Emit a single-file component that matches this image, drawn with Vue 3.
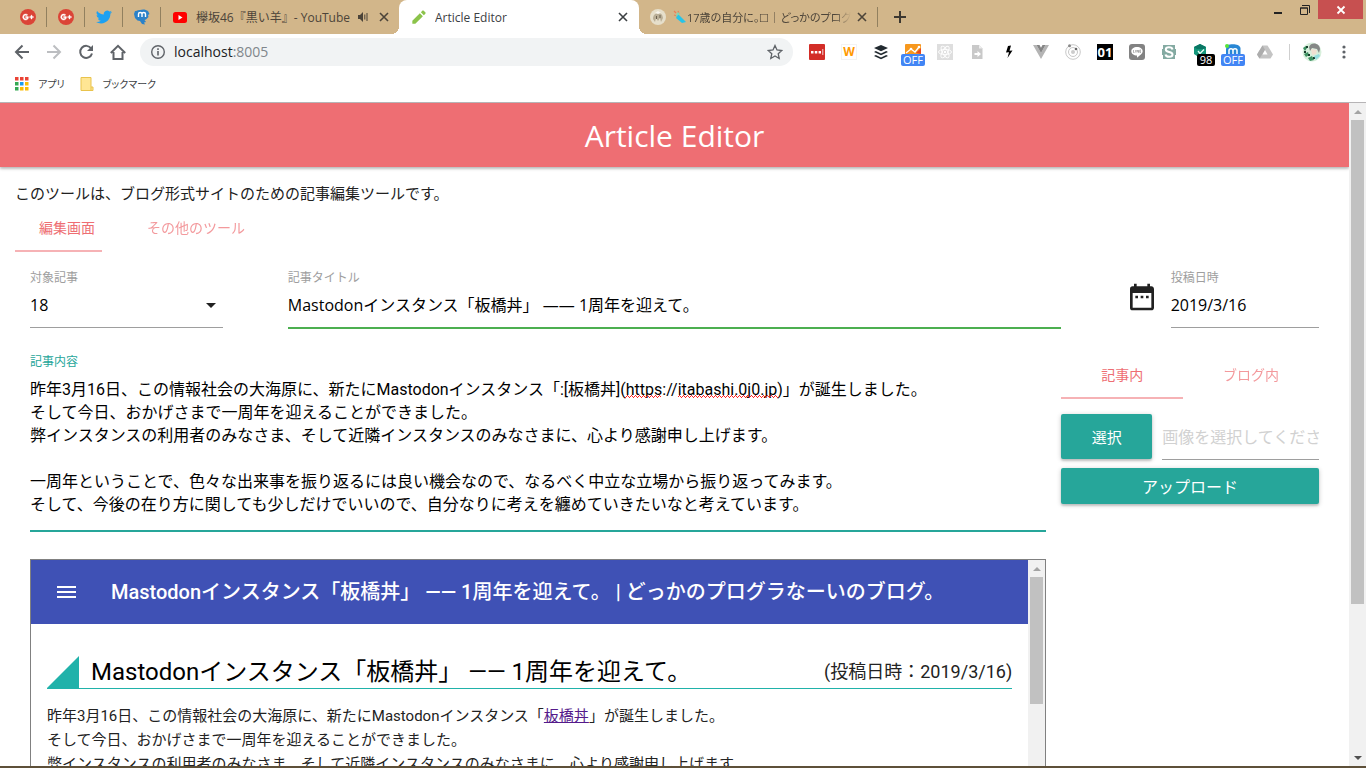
<script setup>
import { ref } from 'vue'

const pinned = [
  { name: 'Google+', kind: 'gplus' },
  { name: 'Google+', kind: 'gplus' },
  { name: 'Twitter', kind: 'twitter' },
  { name: 'Mastodon', kind: 'mastodon' },
]
const address = ref('localhost:8005')
const article = ref('18')
const title = ref('Mastodonインスタンス「板橋丼」 —— 1周年を迎えて。')
const postedAt = ref('2019/3/16')
const body = ref(`昨年3月16日、この情報社会の大海原に、新たにMastodonインスタンス「:[板橋丼](https://itabashi.0j0.jp)」が誕生しました。
そして今日、おかげさまで一周年を迎えることができました。
弊インスタンスの利用者のみなさま、そして近隣インスタンスのみなさまに、心より感謝申し上げます。

一周年ということで、色々な出来事を振り返るには良い機会なので、なるべく中立な立場から振り返ってみます。
そして、今後の在り方に関しても少しだけでいいので、自分なりに考えを纏めていきたいなと考えています。`)
</script>

<template>
  <div class="browser">
    <div class="tabstrip">
      <div v-for="(p, i) in pinned" :key="i" class="pinned">
        <svg v-if="p.kind === 'gplus'" width="16" height="16" viewBox="0 0 16 16">
          <circle cx="8" cy="8" r="8" fill="#db4437" />
          <path d="M8.2 7.4H5.6v1.3h1.5c-.2.7-.7 1-1.5 1a1.7 1.7 0 1 1 1.1-3l1-.9A3 3 0 1 0 5.6 11c1.800 0 2.900-1.200 2.900-2.900zM11 6.200v1.400H9.700v1H11V10h1V8.600h1.400v-1H12V6.200z" fill="#fff" stroke="#fff" stroke-width=".4" />
        </svg>
        <svg v-else-if="p.kind === 'twitter'" width="16" height="16" viewBox="0 0 24 24">
          <path fill="#1da1f2" d="M23.950 4.570a10 10 0 0 1-2.820.770 4.960 4.960 0 0 0 2.160-2.720 9.900 9.900 0 0 1-3.120 1.180 4.920 4.920 0 0 0-8.380 4.480A13.940 13.940 0 0 1 1.640 3.160a4.920 4.920 0 0 0 1.520 6.570 4.900 4.900 0 0 1-2.230-.610v.060a4.920 4.920 0 0 0 3.950 4.830 5 5 0 0 1-2.210.080 4.940 4.940 0 0 0 4.600 3.420A9.870 9.870 0 0 1 0 19.540a13.990 13.990 0 0 0 7.550 2.210c9.140 0 14.300-7.720 14.010-14.650a10 10 0 0 0 2.390-2.530z" />
        </svg>
        <svg v-else width="16" height="16" viewBox="0 0 16 16">
          <path fill="#2b82c9" d="M1 2c2 0 3-1.500 5-1 3-1 6-.5 8 1l1.500 3-1.500 1 .5 2-2.500 2.500-1.500.5 1.500 2-2 .5 1 2-3-.5L6 12l-2.500-.5L1 9 0 5z" />
          <path d="M4.500 8V5c0-2 3.500-2 3.500 0v3m0-3c0-2 3.500-2 3.500 0v3" fill="none" stroke="#fff" stroke-width="1.400" />
        </svg>
      </div>

      <div class="tab tab-left">
        <svg width="16" height="16" viewBox="0 0 16 16"><rect x="1" y="3" width="14" height="11" rx="2.500" fill="#f00" /><path d="M6.500 6l4 2.500-4 2.500z" fill="#fff" /></svg>
        <span class="tab-title">欅坂46『黒い羊』- YouTube</span>
        <svg class="speaker" width="12" height="12" viewBox="0 0 12 12"><path d="M1 4h2l3-3v10L3 8H1z" fill="#4c4439" /><path d="M7.800 3.500v5M10 2v8" stroke="#4c4439" fill="none" /></svg>
        <button class="tab-close" aria-label="閉じる"><svg width="10" height="10" viewBox="0 0 10 10"><path d="M1 1l8 8M9 1l-8 8" stroke="currentColor" stroke-width="1.600" /></svg></button>
      </div>
      <div class="tab tab-active">
        <svg width="16" height="16" viewBox="0 0 24 24"><path fill="#8bc34a" d="M2 17.500V22h4.500L17.800 10.700l-4.500-4.500zM21.500 7a1.400 1.400 0 0 0 0-2L19 2.500a1.400 1.400 0 0 0-2 0l-2.200 2.200 4.500 4.500z" /></svg>
        <span class="tab-title">Article Editor</span>
        <button class="tab-close" aria-label="閉じる"><svg width="10" height="10" viewBox="0 0 10 10"><path d="M1 1l8 8M9 1l-8 8" stroke="currentColor" stroke-width="1.600" /></svg></button>
      </div>
      <div class="tab tab-right">
        <svg width="16" height="16" viewBox="0 0 16 16"><circle cx="8" cy="8" r="8" fill="#e6dfcb" /><path d="M3 10c0-7 9-9 10-1l-2 4-1-4-2 3-2-3-1 4z" fill="#b9ae96" /><path d="M6 7h1v3H6zM9.500 6h1v3h-1z" fill="#6b604f" /><path d="M5 4l3-2 3 2-3 1z" fill="#f8f5ec" /></svg>
        <svg class="cracker" width="14" height="14" viewBox="0 0 14 14"><path d="M5 4l8 8-4 1-6-5z" fill="#27c4e8" /><path d="M1 5l3 1M5 1l1 3M1 1l2 2" stroke="#ef7d54" stroke-width="1.200" /><path d="M2 7l3-5 2 2z" fill="#7ed6b6" /></svg>
        <span class="tab-title faded">17歳の自分に。☐｜どっかのプログ</span>
        <button class="tab-close" aria-label="閉じる"><svg width="10" height="10" viewBox="0 0 10 10"><path d="M1 1l8 8M9 1l-8 8" stroke="currentColor" stroke-width="1.600" /></svg></button>
      </div>
      <button class="new-tab" aria-label="新しいタブ"><svg width="12" height="12" viewBox="0 0 12 12"><path d="M6 0v12M0 6h12" stroke="#3d3830" stroke-width="2" /></svg></button>
      <div class="window-buttons">
        <button aria-label="最小化"><svg width="12" height="12" viewBox="0 0 12 12"><path d="M2 9h8" stroke="#222" stroke-width="2" /></svg></button>
        <button aria-label="元に戻す"><svg width="12" height="12" viewBox="0 0 12 12"><path d="M1.500 4v6.500h7V4zM1 4h8M3 1.500h7.500V9" fill="none" stroke="#222" /></svg></button>
        <button class="win-close" aria-label="ウィンドウを閉じる"><svg width="10" height="10" viewBox="0 0 10 10"><path d="M1.500 1.500l7 7M8.500 1.500l-7 7" stroke="#fff" stroke-width="1.800" /></svg></button>
      </div>
    </div>

    <div class="toolbar">
      <button class="nav" aria-label="戻る"><svg width="16" height="16" viewBox="0 0 16 16"><path d="M15 8H2M8.500 1.500L2 8l6.500 6.500" fill="none" stroke="#5f6368" stroke-width="2" /></svg></button>
      <button class="nav" aria-label="進む"><svg width="16" height="16" viewBox="0 0 16 16"><path d="M1 8h13M7.500 1.500L14 8l-6.500 6.500" fill="none" stroke="#bcbec1" stroke-width="2" /></svg></button>
      <button class="nav" aria-label="再読み込み"><svg width="16" height="16" viewBox="0 0 16 16"><path d="M13.200 4.500A6 6 0 1 0 14 9.500" fill="none" stroke="#5f6368" stroke-width="2" /><path d="M15 1v6H9z" fill="#5f6368" /></svg></button>
      <button class="nav" aria-label="ホーム"><svg width="16" height="16" viewBox="0 0 16 16"><path d="M.8 9L8 1.800 15.200 9M3.500 8V15h9V8" fill="none" stroke="#5f6368" stroke-width="2" /></svg></button>
      <div class="omnibox">
        <svg width="16" height="16" viewBox="0 0 16 16"><circle cx="8" cy="8" r="6.300" fill="none" stroke="#5f6368" stroke-width="1.400" /><path d="M8 7v4.500M8 4.300V6" stroke="#5f6368" stroke-width="1.600" /></svg>
        <label class="address"><span>localhost</span><span class="port">:8005</span><input v-model="address" aria-label="アドレス" /></label>
        <svg width="16" height="16" viewBox="0 0 16 16"><path d="M8 1.500l2 4.500 4.800.5-3.600 3.200 1 4.800L8 12l-4.200 2.500 1-4.800L1.200 6.500 6 6z" fill="none" stroke="#5f6368" stroke-width="1.300" /></svg>
      </div>

      <div class="extensions">
        <span class="ext"><svg width="16" height="16" viewBox="0 0 16 16"><rect width="16" height="16" rx="1" fill="#d32d27" /><path d="M2 7h2.500v2.500H2zM5.800 7h2.500v2.500H5.800zM9.600 7H12v2.500H9.600z" fill="#fff" /><path d="M13.800 5v6" stroke="#fff" stroke-width=".8" /></svg></span>
        <span class="ext ext-w">W</span>
        <span class="ext"><svg width="16" height="16" viewBox="0 0 16 16"><path d="M8 1l7 3-7 3.300L1 4z" fill="#222a30" /><path d="M1 8l1.800-.9L8 9.500l5.200-2.400L15 8l-7 3.300zM1 12l1.800-.9L8 13.500l5.200-2.400L15 12l-7 3.300z" fill="#222a30" /></svg></span>
        <span class="ext"><svg width="16" height="16" viewBox="0 0 16 16"><rect width="16" height="16" rx="1" fill="#f7981d" /><path d="M1 9l5-4 4 3 4-5" fill="none" stroke="#fff" stroke-width="1.300" /><circle cx="6" cy="5" r="1.300" fill="#fff" /><circle cx="14" cy="3" r="1.300" fill="#fff" /><path d="M11 9l5-5v6z" fill="#e8481c" /></svg><b class="badge blue">OFF</b></span>
        <span class="ext"><svg width="16" height="16" viewBox="0 0 16 16"><rect width="16" height="16" fill="#dedede" /><g fill="none" stroke="#fff" stroke-width=".9"><ellipse cx="8" cy="8" rx="6.500" ry="2.600" /><ellipse cx="8" cy="8" rx="6.500" ry="2.600" transform="rotate(60 8 8)" /><ellipse cx="8" cy="8" rx="6.500" ry="2.600" transform="rotate(120 8 8)" /></g><circle cx="8" cy="8" r="1.200" fill="#fff" /></svg></span>
        <span class="ext"><svg width="16" height="16" viewBox="0 0 16 16"><path d="M3 1h7l3.500 3.500V15H3z" fill="#c9c9c9" /><path d="M10 1v3.500h3.500z" fill="#eee" /><path d="M5.500 9h3V7l3.500 3-3.500 3v-2h-3z" fill="#fff" /></svg></span>
        <span class="ext"><svg width="16" height="16" viewBox="0 0 16 16"><path d="M7 2L5 8.500l3-.3L6.500 14l5-7.500-3 .3L10 1.500z" fill="#000" /></svg></span>
        <span class="ext"><svg width="16" height="16" viewBox="0 0 16 16"><path d="M0 1h3.500L8 9l4.500-8H16L8 15z" fill="#b4b4b4" /><path d="M3.500 1h3L8 3.700 9.500 1h3L8 9z" fill="#858585" /></svg></span>
        <span class="ext"><svg width="16" height="16" viewBox="0 0 16 16"><g fill="none" stroke="#c8c8c8"><circle cx="8" cy="8" r="7.300" /><circle cx="8" cy="8" r="4.500" /></g><circle cx="8" cy="8" r="2" fill="#ccc" /><circle cx="4.500" cy="1.800" r="1.500" fill="#888" /><circle cx="11" cy="5" r="1.300" fill="#666" /></svg></span>
        <span class="ext ext-01">01</span>
        <span class="ext"><svg width="16" height="16" viewBox="0 0 16 16"><rect width="16" height="16" rx="3" fill="#828282" /><path d="M8 3c3.300 0 5.700 1.900 5.700 4.300 0 2.300-2.900 4.200-5.700 6.400V11.600c-3.300 0-5.700-1.900-5.700-4.300S4.700 3 8 3z" fill="#fff" /><path d="M4.500 6v2.500h1M6.700 6v2.500M8 8.500V6l1.500 2.500V6M12 6h-1.200v2.500H12M10.800 7.200H12" stroke="#828282" stroke-width=".6" fill="none" /></svg></span>
        <span class="ext"><svg width="16" height="16" viewBox="0 0 16 16"><path d="M2 1h12v4h1v6h-1v4H2v-4H1V5h1z" fill="#84aaa2" /><path d="M11.500 5.500C11 2.500 4.800 2.500 4.800 5.500c0 3.500 6.700 1.500 6.700 5 0 3-6.500 3-7 0" fill="none" stroke="#fff" stroke-width="2" /></svg></span>
        <span class="ext"><svg width="16" height="16" viewBox="0 0 16 16"><path d="M7 0l6 3v7l-6 4-6-4V3z" fill="#13967b" /><path d="M7 0l6 3-2 2H4L1 3z" fill="#0a7664" /><path d="M5 7l2 2.500 4-4" stroke="#eafff7" fill="none" stroke-width="1.300" /></svg><b class="badge black">98</b></span>
        <span class="ext"><svg width="16" height="16" viewBox="0 0 16 16"><path d="M2 1c4-1 12-2 13.500 3v8H1V5z" fill="#2887d4" /><path d="M4 11V6.500c0-2.500 4-2.500 4 0V11m0-4.500c0-2.500 4-2.500 4 0V11" fill="none" stroke="#fff" stroke-width="1.500" /><circle cx="2" cy="2" r="2" fill="#57e438" /></svg><b class="badge blue">OFF</b></span>
        <span class="ext"><svg width="16" height="16" viewBox="0 0 16 16"><path d="M5.500 1.500h5l5.500 9-2.500 4h-11L0 10.500z" fill="#c4c4c4" /><path d="M5.500 1.500l2.600 4.500-5.600 8.500L0 10.500z" fill="#adadad" /><path d="M8 6l2.500 4.500h-5z" fill="#fff" /></svg></span>
      </div>
      <span class="divider"></span>
      <svg class="avatar" width="20" height="20" viewBox="0 0 20 20"><circle cx="10" cy="10" r="9.500" fill="#d8efdc" /><path d="M7 5c2-6 11-4 11 2l-1 4-2-4-5-1-2 3z" fill="#858886" /><path d="M9 7l6 1-1 4-4 1z" fill="#f1dfd2" /><path d="M1 6l3-2 1 2-2 3zM2 12l4-2 1 3-3 2zM6 16l4-2 2 4-4 1z" fill="#3e9162" /><path d="M2 9h2v2H2zM4 4h2v2H4zM6 12h2v2H6zM11 15h2v2h-2z" fill="#183d2d" /><path d="M12 14l5-2 1 2-4 4z" fill="#95dddf" /></svg>
      <button class="menu" aria-label="メニュー"><svg width="4" height="16" viewBox="0 0 4 16"><g fill="#5f6368"><circle cx="2" cy="3" r="1.600" /><circle cx="2" cy="8" r="1.600" /><circle cx="2" cy="13" r="1.600" /></g></svg></button>
    </div>

    <div class="bookmarks">
      <a href="#"><svg width="14" height="14" viewBox="0 0 14 14"><path d="M0 0h3.500v3.500H0zM5 0h3.500v3.500H5zM10 0h3.500v3.500H10z" fill="#ea4335" /><path d="M0 5h3.500v3.500H0zM0 10h3.500v3.500H0z" fill="#34a853" /><path d="M5 5h3.500v3.500H5z" fill="#1a9bf0" /><path d="M10 5h3.500v3.500H10zM5 10h3.500v3.500H5zM10 10h3.500v3.500H10z" fill="#fbbc05" /></svg><span>アプリ</span></a>
      <a href="#"><svg width="14" height="14" viewBox="0 0 14 14"><path d="M1 .5h10v9.500h2v3.500H1z" fill="#ffe694" stroke="#e9c34c" /><path d="M11 10v3.500" stroke="#e9c34c" /></svg><span>ブックマーク</span></a>
    </div>

    <div class="viewport">
      <main class="page">
        <header class="page-header"><h1>Article Editor</h1></header>
        <div class="container">
          <p class="intro">このツールは、ブログ形式サイトのための記事編集ツールです。</p>
          <nav class="tabs"><a class="active" href="#edit">編集画面</a><a href="#tools">その他のツール</a></nav>

          <div class="inner">
            <div class="fields">
              <div class="field w15">
                <label for="article">対象記事</label>
                <div class="select">
                  <select id="article" v-model="article"><option>18</option></select>
                  <svg width="10" height="5" viewBox="0 0 10 5"><path d="M0 0h10L5 5z" fill="#212121" /></svg>
                </div>
              </div>
              <div class="field w60 valid">
                <label for="title">記事タイトル</label>
                <input id="title" v-model="title" />
              </div>
              <div class="date w15">
                <svg width="32" height="32" viewBox="0 0 24 24"><path fill="#212121" d="M9 11H7v2h2zm4 0h-2v2h2zm4 0h-2v2h2zm2-7h-1V2h-2v2H8V2H6v2H5a2 2 0 0 0-2 2v14a2 2 0 0 0 2 2h14c1.100 0 2-.9 2-2V6c0-1.100-.9-2-2-2zm0 16H5V9h14z" /></svg>
                <div class="field">
                  <label for="date">投稿日時</label>
                  <input id="date" v-model="postedAt" />
                </div>
              </div>
            </div>

            <div class="columns">
              <section class="editor">
                <div class="field content">
                  <label for="body">記事内容</label>
                  <textarea id="body" v-model="body" rows="6" spellcheck="false"></textarea>
                  <svg class="squiggle" width="153" height="3">
                    <defs>
                      <pattern id="wave" width="4" height="3" patternUnits="userSpaceOnUse"><path d="M0 2h1v1H0zM1 1h1v1H1zM2 0h1v1H2zM3 1h1v1H3z" fill="#f22" /></pattern>
                    </defs>
                    <rect width="36" height="3" fill="url(#wave)" />
                    <rect x="53" width="100" height="3" fill="url(#wave)" />
                  </svg>
                </div>

                <div class="preview">
                  <div class="preview-page">
                    <div class="preview-bar">
                      <svg width="24" height="24" viewBox="0 0 24 24"><path d="M2 18h19v-2H2zm0-5h19v-2H2zm0-7v2h19V6z" fill="#fff" /></svg>
                      <span>Mastodonインスタンス「板橋丼」 —— 1周年を迎えて。 | どっかのプログラなーいのブログ。</span>
                    </div>
                    <article>
                      <div class="article-head">
                        <span class="corner"></span>
                        <h2>Mastodonインスタンス「板橋丼」 —— 1周年を迎えて。</h2>
                        <time>(投稿日時：2019/3/16)</time>
                      </div>
                      <p>昨年3月16日、この情報社会の大海原に、新たにMastodonインスタンス「<a href="#itabashi">板橋丼</a>」が誕生しました。<br />そして今日、おかげさまで一周年を迎えることができました。<br />弊インスタンスの利用者のみなさま、そして近隣インスタンスのみなさまに、心より感謝申し上げます。</p>
                    </article>
                  </div>
                  <div class="scrollbar inner-bar"><span class="arrow up muted"></span><span class="thumb"></span></div>
                </div>
              </section>

              <aside class="images">
                <nav class="tabs split"><a class="active" href="#article-images">記事内</a><a href="#blog-images">ブログ内</a></nav>
                <div class="pick">
                  <button class="btn choose">選択</button>
                  <input placeholder="画像を選択してください" aria-label="画像" />
                </div>
                <button class="btn upload">アップロード</button>
              </aside>
            </div>
          </div>
        </div>
      </main>
      <div class="scrollbar page-bar"><span class="arrow up muted"></span><span class="thumb"></span><span class="arrow down"></span></div>
    </div>
    <div class="taskbar-edge"></div>
  </div>
</template>

<style>
html, body { background: #fff; }
</style>

<style scoped>
.browser, .browser * { box-sizing: border-box; }
.browser {
  height: 100vh;
  display: flex;
  flex-direction: column;
  overflow: hidden;
  font-family: "Open Sans", "Noto Sans CJK JP", sans-serif;
  color: #212121;
}
svg { display: block; flex: none; }
button { border: 0; padding: 0; background: none; font: inherit; color: inherit; display: flex; align-items: center; justify-content: center; }
input, textarea, select { font: inherit; color: #000; outline: 0; border-radius: 0; }

/* tab strip */
.tabstrip { flex: none; height: 34px; background: #d2b68a; display: flex; align-items: center; padding-left: 9px; font-size: 12px; color: #4c4439; }
.pinned { width: 38px; height: 20px; display: flex; align-items: center; justify-content: center; border-right: 1px solid #91805f; }
.tab { display: flex; align-items: center; height: 34px; flex: none; }
.tab-title { white-space: nowrap; overflow: hidden; flex: 1; margin-left: 8px; }
.tab-left { width: 238px; padding: 0 10px 0 11px; }
.speaker { margin-right: 10px; }
.tab-close { width: 10px; height: 10px; }
.tab-active { position: relative; width: 240px; background: #fff; border-radius: 8px 8px 0 0; padding: 0 11px 0 12px; color: #3c4043; }
.tab-active::before, .tab-active::after { content: ""; position: absolute; bottom: 0; width: 8px; height: 8px; }
.tab-active::before { left: -8px; background: radial-gradient(circle at 0 0, #d2b68a 8px, #fff 8px); }
.tab-active::after { right: -8px; background: radial-gradient(circle at 100% 0, #d2b68a 8px, #fff 8px); }
.tab-right { width: 239px; height: 20px; padding: 0 10px 0 11px; border-right: 1px solid #91805f; }
.cracker { margin-left: 7px; }
.tab-title.faded { margin: 0 6px 0 0; font-size: 11px; font-feature-settings: "palt"; mask-image: linear-gradient(to right, #000 90%, transparent); }
.new-tab { width: 44px; }
.window-buttons { margin-left: auto; align-self: flex-start; display: flex; padding-right: 3px; }
.window-buttons button { width: 27px; height: 19px; }
.window-buttons .win-close { width: 45px; background: #c75050; }

/* toolbar */
.toolbar { flex: none; height: 36px; display: flex; align-items: center; padding: 0 12px 0 6px; background: #fff; }
.nav { width: 32px; height: 32px; }
.omnibox { flex: 1; height: 28px; margin-left: 6px; border-radius: 14px; background: #f1f3f4; display: flex; align-items: center; padding: 0 10px; }
.address { flex: 1; position: relative; margin-left: 8px; font-size: 14px; line-height: 20px; }
.address span { color: #202124; }
.address .port { color: #80868b; }
.address input { position: absolute; inset: 0; width: 100%; border: 0; padding: 0; background: transparent; color: transparent; }
.extensions { display: flex; gap: 16px; margin-left: 16px; }
.ext { position: relative; width: 16px; height: 16px; line-height: 16px; text-align: center; font-size: 14px; font-weight: 700; }
.ext-w { color: #f90; border: 1px solid #f3f3f3; line-height: 14px; font-size: 12px; }
.ext-01 { background: #000; color: #fff; font-size: 13px; }
.badge { position: absolute; top: 10px; height: 12px; border-radius: 2px; color: #fff; font-size: 11px; line-height: 12px; font-weight: 400; }
.blue { left: -4px; width: 24px; background: #4285f4; }
.black { left: 4px; width: 18px; background: #000; }
.divider { width: 1px; height: 16px; background: #cfcfcf; margin-left: 16px; }
.avatar { margin: 0 12px; }
.menu { width: 20px; height: 20px; }

.bookmarks { flex: none; height: 33px; padding: 0 15px 5px; display: flex; align-items: center; gap: 15px; border-bottom: 1px solid #b6b4b6; font-size: 10px; font-feature-settings: "palt"; }
.bookmarks a { display: flex; align-items: center; gap: 9px; color: #3c4043; text-decoration: none; }

/* page */
.viewport { flex: 1; min-height: 0; display: flex; }
.page { flex: 1; min-width: 0; overflow: hidden; }
.page-header { height: 64px; padding-top: 2px; display: flex; align-items: center; justify-content: center; background: #ee6e73; color: #fff; box-shadow: 0 2px 2px rgba(0, 0, 0, .14), 0 1px 4px rgba(0, 0, 0, .2); }
h1 { margin: 0; font-size: 30px; line-height: 40px; font-weight: 400; }
.container { padding: 0 15px; }
.intro { margin: 15px 0 0; font-size: 15px; line-height: 22px; }
.tabs { display: flex; gap: 4px; height: 48px; font-size: 14px; line-height: 48px; }
.tabs a { padding: 0 24px; color: #ee6e73; opacity: .7; text-decoration: none; text-align: center; position: relative; }
.tabs .active { opacity: 1; }
.tabs .active::after { content: ""; position: absolute; left: 0; right: 17px; bottom: 0; height: 2px; background: #f6b2b5; }
.inner { padding: 17px 15px 0; }
.fields { display: flex; justify-content: space-between; align-items: flex-start; }
.w15 { width: 15%; }
.w60 { width: 60%; }
.field label { display: block; font-size: 12px; line-height: 18px; color: #9e9e9e; }
.field input, .field select { display: block; width: 100%; height: 41px; padding: 0 0 4px; border: 0; border-bottom: 1px solid #9e9e9e; background: transparent; font-size: 16px; }
.field.valid input { height: 42px; padding-bottom: 6px; border-bottom: 2px solid #4caf50; }
.select { position: relative; }
.select select { appearance: none; }
.select svg { position: absolute; right: 7px; top: 16px; pointer-events: none; }
.date { display: flex; gap: 13px; }
.date > svg { margin-top: 12px; }
.date .field { flex: 1; min-width: 0; }

.columns { display: grid; grid-template-columns: minmax(0, 1fr) 20%; gap: 15px; margin-top: 22px; }
.content { position: relative; padding-top: 2px; }
.content label { color: #26a69a; }
textarea { display: block; width: 100%; padding: 7px 0 14px; border: 0; border-bottom: 2px solid #26a69a; resize: none; overflow: hidden; font-family: Roboto, "Noto Sans CJK JP", sans-serif; font-size: 16px; line-height: 23px; background: transparent; }
.squiggle { position: absolute; top: 44px; left: 595px; pointer-events: none; }

.preview { margin-top: 27px; height: 400px; display: flex; border: 1px solid #808080; font-family: Roboto, "Noto Sans CJK JP", sans-serif; }
.preview-page { flex: 1; min-width: 0; }
.preview-bar { height: 64px; display: flex; align-items: center; gap: 32px; padding: 0 24px; background: #3f51b5; color: #fff; font-size: 20px; font-weight: 500; white-space: nowrap; }
.preview-bar span { padding-bottom: 4px; }
article { padding: 32px 16px 0; }
.article-head { display: flex; align-items: center; border-bottom: 1px solid #20b2aa; height: 33px; color: #000; }
.corner { width: 32px; height: 32px; background: #20b2aa; clip-path: polygon(100% 0, 100% 100%, 0 100%); }
h2 { margin: 0 0 0 12px; font-size: 24px; line-height: 32px; font-weight: 400; }
time { margin-left: auto; padding-bottom: 4px; font-size: 18px; color: #222; }
article p { margin: 15px 0 0; font-size: 15px; line-height: 24px; color: #222; white-space: nowrap; }
article p a { color: #551a8b; }

.tabs.split { display: grid; grid-template-columns: 1fr 1fr; gap: 7px; padding-right: 7px; }
.split a { padding: 0; }
.tabs.split .active::after { right: 0; }
.pick { display: flex; gap: 10px; margin: 15px 0 8px; }
.pick input { flex: 1; min-width: 0; height: 46px; padding: 0; border: 0; border-bottom: 1px solid #9e9e9e; font-size: 16px; }
.pick input::placeholder { color: #d1d1d1; opacity: 1; }
.btn { background: #26a69a; color: #fff; border-radius: 2px; font-size: 15px; box-shadow: 0 2px 2px rgba(0, 0, 0, .14), 0 1px 5px rgba(0, 0, 0, .2); }
.choose { width: 91px; height: 45px; }
.upload { width: 100%; height: 36px; font-size: 16px; }

.scrollbar { flex: none; width: 17px; background: #f1f1f1; display: flex; flex-direction: column; align-items: center; }
.arrow { width: 17px; height: 17px; display: flex; align-items: center; justify-content: center; }
.arrow::before { content: ""; border: 4px solid transparent; }
.up::before { border-top: 0; border-bottom-color: #505050; }
.down::before { border-bottom: 0; border-top-color: #505050; }
.muted::before { border-bottom-color: #a3a3a3; }
.thumb { width: 13px; background: #c1c1c1; }
.page-bar .thumb { height: 73%; }
.page-bar .down { margin-top: auto; }
.inner-bar .thumb { height: 127px; }
.taskbar-edge { flex: none; height: 2px; background: #5e5039; }
</style>
